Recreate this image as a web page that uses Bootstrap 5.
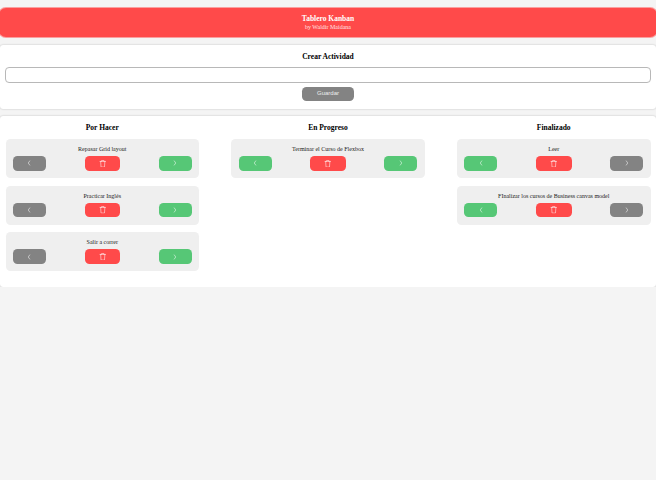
<!DOCTYPE html>
<html lang="es">
<head>
<meta charset="utf-8">
<meta name="viewport" content="width=device-width, initial-scale=1">
<title>Tablero Kanban</title>
<link href="https://cdn.jsdelivr.net/npm/bootstrap@5.3.0/dist/css/bootstrap.min.css" rel="stylesheet">
<style>
body { background: #f4f4f4; color: #000; font-family: "Liberation Serif", serif; font-size: 6px; line-height: 7px; padding-top: 8px; overflow-x: hidden; }
h1, h2 { font-size: 7.5px; line-height: 9px; font-weight: 700; margin: 0; }
.board-header { height: 29px; background: #ff4a4a; border-radius: 7px; padding-top: 6px; margin: 0 -1px 8px; box-shadow: 0 0 0 1px rgba(255,74,74,.5); }
.by { color: #ffe3e3; padding-top: .6px; }
.panel { background: #fff; border-radius: 3px; box-shadow: 0 0 2px rgba(0,0,0,.24); padding: 6.5px 5.5px 0; }
.create-panel { height: 63.6px; margin-bottom: 7.4px; }
.board-panel { height: 170.6px; padding-top: 6.8px; }
.activity-input { width: 646px; height: 16px; min-height: 0; padding: 0 4px; margin: 6.5px 0 3.6px -.5px; border: 1px solid #b8b8b8; border-radius: 4px; font-size: 6px; }
.board-columns { display: grid; grid-template-columns: repeat(3, 193.5px); justify-content: space-between; }
.board-columns h2 { margin-bottom: 7.2px; }
.task { height: 39px; background: #efefef; border-radius: 4.5px; padding: 7px 7.3px 0; margin-bottom: 7.7px; }
.task p { margin: 0 0 3px; color: #1c1c1c; }
.action { --bs-btn-padding-x: 0; --bs-btn-padding-y: 0; --bs-btn-border-width: 0; --bs-btn-border-radius: 4.5px; --bs-btn-color: #fff; display: flex; align-items: center; justify-content: center; width: 33.2px; height: 14.6px; }
.action.save { width: 51.5px; background: #838383; color: #ededed; font: 6px "Liberation Sans", sans-serif; padding-bottom: 1px; }
.action.off { background: #838383; }
.action.move { background: #56c776; }
.action.remove { width: 35.5px; background: #ff4a4a; }
.action svg { width: 6px; height: 6px; fill: none; stroke: #fff; stroke-opacity: .7; stroke-width: 1; stroke-linecap: round; stroke-linejoin: round; }
.action.remove svg { height: 7.5px; width: 7.5px; stroke-opacity: .85; }
</style>
</head>
<body>
<svg class="d-none" aria-hidden="true">
  <symbol id="left" viewBox="0 0 8 8"><path d="M5 1.2 3 4l2 2.8"/></symbol>
  <symbol id="right" viewBox="0 0 8 8"><path d="m3 1.2 2 2.8-2 2.8"/></symbol>
  <symbol id="trash" viewBox="0 0 16 16"><path stroke-width="1.3" d="M2 3h12M5.5 3V1h5v2M3.5 3l.8 12h7.4l.8-12"/></symbol>
</svg>
<header class="board-header text-center text-white">
  <h1>Tablero Kanban</h1>
  <div class="by">by Waldir Maidana</div>
</header>
<section class="panel create-panel text-center">
  <h2>Crear Actividad</h2>
  <input class="form-control activity-input" type="text" aria-label="Actividad">
  <button class="btn action save mx-auto" type="button">Guardar</button>
</section>
<main class="panel board-panel text-center">
  <div class="board-columns">
    <section>
      <h2>Por Hacer</h2>
      <article class="task"><p>Repasar Grid layout</p><div class="d-flex justify-content-between">
        <button class="btn action off"><svg><use href="#left"/></svg></button><button class="btn action remove"><svg><use href="#trash"/></svg></button><button class="btn action move"><svg><use href="#right"/></svg></button></div></article>
      <article class="task"><p>Practicar Inglés</p><div class="d-flex justify-content-between">
        <button class="btn action off"><svg><use href="#left"/></svg></button><button class="btn action remove"><svg><use href="#trash"/></svg></button><button class="btn action move"><svg><use href="#right"/></svg></button></div></article>
      <article class="task"><p>Salir a correr</p><div class="d-flex justify-content-between">
        <button class="btn action off"><svg><use href="#left"/></svg></button><button class="btn action remove"><svg><use href="#trash"/></svg></button><button class="btn action move"><svg><use href="#right"/></svg></button></div></article>
    </section>
    <section>
      <h2>En Progreso</h2>
      <article class="task"><p>Terminar el Curso de Flexbox</p><div class="d-flex justify-content-between">
        <button class="btn action move"><svg><use href="#left"/></svg></button><button class="btn action remove"><svg><use href="#trash"/></svg></button><button class="btn action move"><svg><use href="#right"/></svg></button></div></article>
    </section>
    <section>
      <h2>Finalizado</h2>
      <article class="task"><p>Leer</p><div class="d-flex justify-content-between">
        <button class="btn action move"><svg><use href="#left"/></svg></button><button class="btn action remove"><svg><use href="#trash"/></svg></button><button class="btn action off"><svg><use href="#right"/></svg></button></div></article>
      <article class="task"><p>FInalizar los cursos de Business canvas model</p><div class="d-flex justify-content-between">
        <button class="btn action move"><svg><use href="#left"/></svg></button><button class="btn action remove"><svg><use href="#trash"/></svg></button><button class="btn action off"><svg><use href="#right"/></svg></button></div></article>
    </section>
  </div>
</main>
<script src="https://cdn.jsdelivr.net/npm/bootstrap@5.3.0/dist/js/bootstrap.bundle.min.js"></script>
</body>
</html>
